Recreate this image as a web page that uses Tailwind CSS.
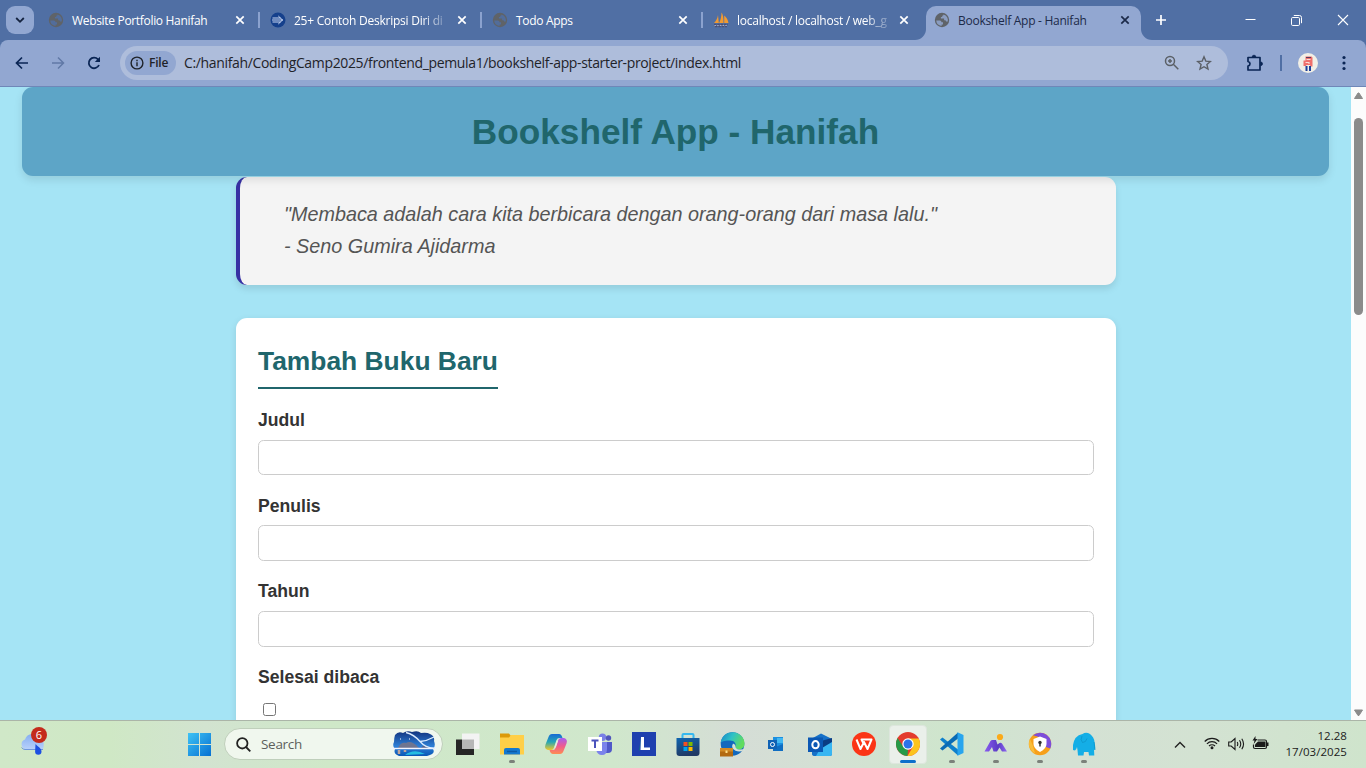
<!DOCTYPE html>
<html lang="id">
<head>
<meta charset="utf-8">
<title>Bookshelf App - Hanifah</title>
<script src="https://cdn.jsdelivr.net/npm/@tailwindcss/browser@4"></script>
</head>
<body class="h-screen w-screen overflow-hidden flex flex-col font-['Open_Sans','Noto_Sans',sans-serif]">

<svg width="0" height="0" class="absolute">
  <defs>
    <symbol id="globe" viewBox="0 0 16 16"><circle cx="8" cy="8" r="7.2" fill="#5f6368"/><path d="M2.200 8.500h3.600q1.700 0 1.700 1.700h1.500v2.300H7.600v1.400Q2.600 13.200 2.200 8.500zM9.500 2.400Q9.600 3.600 8.200 3.800v1.300H6.900v1.400h3.200v1.800h1.400l.6 1.200h1.700Q14.600 4.200 9.500 2.400z" fill="currentColor" opacity=".85"/></symbol>
    <symbol id="x" viewBox="0 0 10 10"><path d="M1.300 1.300 8.700 8.700M8.700 1.300 1.300 8.700" stroke="currentColor" stroke-width="1.700" fill="none"/></symbol>
  </defs>
</svg>

<!-- Tab strip -->
<header class="h-10 shrink-0 bg-[#506fa4] flex text-white text-[12px]">
  <div class="w-[48px] pl-1.5 pt-1.5">
    <div class="size-7 rounded-[9px] bg-[#92a7d1] flex items-center justify-center"><svg width="10" height="8" viewBox="0 0 10 8" fill="none" stroke="#15233f" stroke-width="1.800"><path d="M1.200 2 5 5.800 8.800 2"/></svg></div>
  </div>
  <div class="w-[212px] flex items-center">
    <svg class="size-4 text-[#506fa4]"><use href="#globe"/></svg>
    <span class="ml-2 w-[154px] whitespace-nowrap tracking-[-0.32px] pt-0.5">Website Portfolio Hanifah</span>
    <svg class="size-2.5 ml-[9px]"><use href="#x"/></svg>
    <i class="ml-auto w-[2px] h-4 bg-[#8ba2cf]"></i>
  </div>
  <div class="w-[222px] pl-[10px] flex items-center">
    <svg width="16" height="16" viewBox="0 0 16 16"><circle cx="8" cy="8" r="7.500" fill="#15408c"/><path d="M2.500 6h8M2 8h11M2.500 10h8M8.300 4 12.500 8l-4.200 4" stroke="#dfe9ff" stroke-width=".9" fill="none"/></svg>
    <span class="ml-[8px] w-[151px] whitespace-nowrap tracking-[-0.25px] pt-0.5 [mask-image:linear-gradient(90deg,#000_128px,transparent_158px)]">25+ Contoh Deskripsi Diri di</span>
    <svg class="size-2.5 ml-[12px]"><use href="#x"/></svg>
    <i class="ml-auto w-[2px] h-4 bg-[#8ba2cf]"></i>
  </div>
  <div class="w-[221px] pl-[10px] flex items-center">
    <svg class="size-4 text-[#506fa4]"><use href="#globe"/></svg>
    <span class="ml-2 w-[152px] whitespace-nowrap tracking-[-0.32px] pt-0.5">Todo Apps</span>
    <svg class="size-2.5 ml-[10px]"><use href="#x"/></svg>
    <i class="ml-auto w-[2px] h-4 bg-[#8ba2cf]"></i>
  </div>
  <div class="w-[211px] pl-[10px] flex items-center">
    <svg width="16" height="16" viewBox="0 0 16 16"><path d="M1 11C3 9 4.500 6.500 5 3l.8 8zM6.200 11C7.500 8 8.500 5 8.500.5 10.500 3 10.600 8 10.500 11zM11.200 11V3.500C13.500 5 15 8 15.500 11z" fill="#f29a30"/><path d="M1 12.500h14M2 14.500h12" stroke="#4a4f75" stroke-width="1.600" stroke-dasharray="2.500 .8"/><path d="M1.500 13.500h13" stroke="#ccd" stroke-width=".7" stroke-dasharray="1.500 1.200"/></svg>
    <span class="ml-[8px] w-[151px] whitespace-nowrap tracking-[-0.25px] pt-0.5 [mask-image:linear-gradient(90deg,#000_128px,transparent_158px)]">localhost / localhost / web_g</span>
    <svg class="size-2.5 ml-[11px]"><use href="#x"/></svg>
  </div>
  <div class="w-3 bg-[#92a7d1] self-end h-[34px] relative"><div class="absolute inset-0 bg-[#506fa4] rounded-br-[11px]"></div></div>
  <div class="w-[215px] mt-1.5 pb-1.5 pl-[8px] rounded-t-[10px] bg-[#92a7d1] text-[#1c2a49] flex items-center">
    <svg class="size-4 text-[#92a7d1]"><use href="#globe"/></svg>
    <span class="ml-[8px] w-[152px] whitespace-nowrap tracking-[-0.27px] pt-0.5">Bookshelf App - Hanifah</span>
    <svg class="size-2.5 ml-[10px]"><use href="#x"/></svg>
  </div>
  <div class="w-3 bg-[#92a7d1] self-end h-[34px] relative"><div class="absolute inset-0 bg-[#506fa4] rounded-bl-[11px]"></div></div>
  <div class="flex-1 flex items-center">
    <svg class="ml-[2px]" width="12" height="12" viewBox="0 0 12 12"><path d="M6 1v10M1 6h10" stroke="#fff" stroke-width="1.700"/></svg>
    <svg class="ml-[78px]" width="11" height="11" viewBox="0 0 11 11"><path d="M.5 4.500h10" stroke="#fff"/></svg>
    <svg class="ml-[35px]" width="11" height="11" viewBox="0 0 11 11" fill="none" stroke="#fff"><rect x=".5" y="2.500" width="8" height="8" rx="1.200"/><path d="M2.800.5h5.700a2 2 0 0 1 2 2v5.700"/></svg>
    <svg class="ml-[35px]" width="12" height="12" viewBox="0 0 12 12"><path d="M1 1l10 10M11 1 1 11" stroke="#fff" stroke-width="1.100"/></svg>
  </div>
</header>

<!-- Toolbar -->
<div class="h-[47px] shrink-0 bg-[#506fa4]">
  <div class="h-full bg-[#92a7d1] rounded-t-[8px] border-b border-[#6f87b8] flex items-center text-[#0d2757]">
    <svg class="ml-[15px]" width="14" height="14" viewBox="0 0 14 14" fill="none" stroke="#0a2554" stroke-width="1.700"><path d="M13 7H2M7 1.500 1.500 7 7 12.500"/></svg>
    <svg class="ml-[22px]" width="14" height="14" viewBox="0 0 14 14" fill="none" stroke="#6179a6" stroke-width="1.500"><path d="M1 7h11M7 1.500 12.500 7 7 12.500"/></svg>
    <svg class="ml-[22px]" width="14" height="14" viewBox="0 0 14 14"><path d="M12 9A5.300 5.300 0 1 1 11 3.300L12.500 5" fill="none" stroke="#0a2554" stroke-width="1.800"/><path d="M13 .8V6H7.800z" fill="#0a2554"/></svg>
    <div class="ml-[19px] w-[1108px] h-[34px] rounded-full bg-[#aebddb] flex items-center pl-[5px]">
      <div class="h-6 w-[51px] rounded-full bg-[#92a7d1] flex items-center pl-[5px] text-[12px] font-semibold text-[#1f2329]">
        <svg width="14" height="14" viewBox="0 0 14 14"><circle cx="7" cy="7" r="5.900" fill="none" stroke="#1f2329" stroke-width="1.400"/><path d="M7 6.200V10.200M7 3.800v1.400" stroke="#1f2329" stroke-width="1.400"/></svg>
        <span class="ml-[5px] tracking-[-0.2px]">File</span>
      </div>
      <span class="ml-[8px] text-[14px] tracking-[-0.35px] text-[#1f2329] w-[970px] whitespace-nowrap pb-0.5">C:/hanifah/CodingCamp2025/frontend_pemula1/bookshelf-app-starter-project/index.html</span>
      <svg class="ml-[10px]" width="16" height="16" viewBox="0 0 16 16" fill="none" stroke="#5b6067" stroke-width="1.500"><circle cx="6" cy="6" r="4.500"/><path d="m9.300 9.300 5 5M6 4v4M4 6h4"/></svg>
      <svg class="ml-[16px]" width="16" height="16" viewBox="0 0 16 16" fill="none" stroke="#5b6067" stroke-width="1.400"><path d="m8 1.800 1.800 4.300 4.600.4-3.500 3 1.100 4.600L8 11.700l-4 2.400 1.100-4.600-3.500-3 4.600-.4z"/></svg>
    </div>
    <svg class="ml-[18px]" width="18" height="18" viewBox="0 0 18 18"><path d="M2 3.500h12v12.500H2v-4q2-.4 2-2.200T2 7.500z" fill="none" stroke="#0a2554" stroke-width="1.700" stroke-linejoin="round"/><path d="M6.200 3a1.800 1.800 0 0 1 3.600 0zM14.700 8a1.800 1.800 0 0 1 0 3.600z" fill="#0a2554" stroke="#0a2554" stroke-width=".8"/></svg>
    <i class="ml-[16px] w-[2px] h-4 bg-[#506fa4]"></i>
    <svg class="ml-[16px]" width="20" height="20" viewBox="0 0 20 20"><circle cx="10" cy="10" r="10" fill="#f1efe6"/><path d="M7.500 3.500h6l1 1v9h-2L12 12H8.500L8 13H5.500V7.500h2z" fill="#f0706c"/><path d="M8.500 6.500h4M7.500 9.500h3.500v1.500" stroke="#fbdcd5" stroke-width="1.100" fill="none"/><path d="M8.500 13v5M12 13v5" stroke="#1d3f9a" stroke-width="2"/><path d="M8 4.500h5" stroke="#5b3a5e"/></svg>
    <svg class="ml-[24px]" width="4" height="16" viewBox="0 0 4 16" fill="#0a2554"><circle cx="2" cy="2.500" r="1.600"/><circle cx="2" cy="8" r="1.600"/><circle cx="2" cy="13.500" r="1.600"/></svg>
  </div>
</div>

<!-- Page -->
<div class="flex-1 min-h-0 flex">
  <main class="flex-1 overflow-hidden bg-[#a5e4f5] px-[22px] font-['Liberation_Sans',Arial,sans-serif] text-[17.6px] leading-[1.6] text-[#333]">
    <div class="relative h-[89px] rounded-[11px] bg-[#5da5c7] shadow-[0_4px_9px_rgba(0,0,0,0.1)] flex items-center justify-center pt-px">
      <h1 class="text-[35.2px] font-bold text-[#20666c] whitespace-nowrap">Bookshelf App - Hanifah</h1>
    </div>
    <div class="w-[880px] ml-[214px]">
      <blockquote class="mt-px h-[108px] rounded-[11px] border-l-4 border-[#3730a3] bg-[#f4f4f4] shadow-[0_4px_7px_rgba(0,0,0,0.1)] pl-11 pt-[22px] text-[19.8px] italic text-[#555]">"Membaca adalah cara kita berbicara dengan orang-orang dari masa lalu."<br>- Seno Gumira Ajidarma</blockquote>
      <section class="mt-[33px] h-[500px] rounded-[11px] bg-white shadow-[0_2px_7px_rgba(0,0,0,0.1)] p-[22px]">
        <h2 class="w-[240px] h-[49px] text-[26.4px] font-bold text-[#20666c] border-b-2 border-[#20666c] whitespace-nowrap mb-[17px]">Tambah Buku Baru</h2>
        <div class="h-[85.66px]"><label class="block font-bold mb-[5.5px]">Judul</label><input class="block w-full h-[35.5px] rounded-[5.5px] border border-[#ccc] bg-white"></div>
        <div class="h-[85.66px]"><label class="block font-bold mb-[5.5px]">Penulis</label><input class="block w-full h-[35.5px] rounded-[5.5px] border border-[#ccc] bg-white"></div>
        <div class="h-[85.66px]"><label class="block font-bold mb-[5.5px]">Tahun</label><input class="block w-full h-[36px] rounded-[5.5px] border border-[#ccc] bg-white"></div>
        <div><label class="block font-bold mb-[11.8px]">Selesai dibaca</label><input type="checkbox" class="block ml-[5px] size-[13px]"></div>
      </section>
    </div>
  </main>
  <aside class="w-[15px] shrink-0 bg-[#fcfcfc] flex flex-col items-center">
    <svg class="mt-[5px]" width="9" height="8" viewBox="0 0 9 8"><path d="M4 1h1L8.500 6.500H.5z" fill="#8b8b8b" stroke="#8b8b8b" stroke-linejoin="round"/></svg>
    <div class="mt-[18px] w-[9px] h-[197px] rounded-full bg-[#8b8b8b]"></div>
    <svg class="mt-auto mb-[3px]" width="9" height="8" viewBox="0 0 9 8"><path d="M4 6.500h1L8.500 1H.5z" fill="#8b8b8b" stroke="#8b8b8b" stroke-linejoin="round"/></svg>
  </aside>
</div>

<!-- Taskbar -->
<footer class="h-12 shrink-0 border-t border-[#abb5a8] bg-[linear-gradient(90deg,#d0e8c8_0%,#cfe8c5_8%,#d2e3d0_15%,#cfe8c8_24%,#d0e7cc_45%,#d5ddd6_54%,#d4e0d4_60%,#cfe5cd_69%,#d4e1d4_78%,#d3e2d2_88%,#cfe4cc_100%)] flex items-center text-[#1b1b1b]">
  <div class="w-[188px] pl-[19px]">
    <div class="relative size-7">
      <svg class="absolute left-0 -top-[4px]" width="28" height="30" viewBox="0 0 28 30"><defs><linearGradient id="cl" x2="0" y2="1"><stop stop-color="#85aef0"/><stop offset="1" stop-color="#b7d0fb"/></linearGradient></defs><path d="M6 22a5 5 0 0 1 0-9.500A8 8 0 0 1 20 10c4 .5 6 7 4 12z" fill="url(#cl)"/><path d="M2.500 20.500Q4 22.500 6 22.500h18" stroke="#6f97dd" fill="none"/><path d="M16.500 17c2.500 3 6 4 6 7.500a3.200 3.200 0 0 1-6.400 0z" fill="#1d50e2"/></svg>
      <div class="absolute left-[12px] -top-[4px] size-4 rounded-full bg-[#c42b1c] text-white text-[11px] leading-4 text-center">6</div>
    </div>
  </div>
  <svg width="23" height="23" viewBox="0 0 23 23"><defs><linearGradient id="wn" x2="1" y2="1"><stop stop-color="#3ec3f5"/><stop offset="1" stop-color="#0670d2"/></linearGradient></defs><path d="M0 0h11v11H0zM12 0h11v11H12zM0 12h11v11H0zM12 12h11v11H12z" fill="url(#wn)"/></svg>
  <div class="ml-[13px] mb-px w-[219px] h-8 rounded-full bg-[#f0f7ee] border border-[#bfcfbb] flex items-center pl-[11px]">
    <svg width="15" height="15" viewBox="0 0 15 15" fill="none" stroke="#222" stroke-width="1.800"><circle cx="6.300" cy="6.300" r="5.200"/><path d="m10 10 4.300 4.300"/></svg>
    <span class="ml-[10px] text-[13.500px] tracking-[-0.3px] text-[#5d5f5c] w-[130px]">Search</span>
    <svg width="46" height="26" viewBox="0 0 46 26"><defs><linearGradient id="nt" x2="0" y2="1"><stop stop-color="#12347f"/><stop offset=".6" stop-color="#2e7fd6"/><stop offset="1" stop-color="#0a56b5"/></linearGradient></defs><path d="M4 4q3-4 8-2 4-3 9-1 6-2 9 1 6-1 9 1 5 2 4 7 2 5-1 8 3 5-6 7H8q-6-2-4-7-3-3-1-7 0-4 1-7z" fill="url(#nt)"/><path d="M7 17c2-5 5-6 8-5 3-2 8-1 13 5z" fill="#6f7590"/><path d="M30 17q4-6 8 0z" fill="#54628b"/><path d="M8 19v4M14 19v2" stroke="#bda39b" stroke-width="2.500"/><path d="M14 24q9-7 20-1z" fill="#25bce2"/><path d="M0 17.500h45" stroke="#f2f4ff" stroke-width="1.700"/><path d="M15 1.500q8 2 14 9t15 6.500M43 6Q36 10 29 10.500" stroke="#dcecff" stroke-width="1.300" fill="none"/><path d="M9 8h1M18 8h1" stroke="#fff"/></svg>
  </div>
  <div class="ml-[3px] flex h-full text-[#7b817a]">
    <div class="w-11 flex flex-col items-center pt-[12px]"><svg width="24" height="24" viewBox="0 0 24 24"><path d="M0 6.500h18V22H0z" fill="#262626"/><path d="M6 .5h17.500V16H6z" fill="#f3f3f3"/><path d="M6 6.500h12V16H6z" fill="#b6b6b6"/></svg></div>
    <div class="w-11 flex flex-col items-center pt-[11px]"><svg width="24" height="24" viewBox="0 0 24 24"><path d="M0 1.500h9l2 2.500v3H0z" fill="#dc9a09"/><path d="M0 5.500h9L11 3h13v19.500H0z" fill="#ffcf48"/><path d="M4 22.500V18q0-2 2-2h12q2 0 2 2v4.500z" fill="#1479d0"/><path d="M7 19.500h10" stroke="#0c5aa6" stroke-width="1.500"/></svg><i class="mt-[4px] w-1.5 h-[3px] rounded bg-current"></i></div>
    <div class="w-11 flex flex-col items-center pt-[12px]"><svg width="24" height="22" viewBox="0 0 24 22"><defs><linearGradient id="ca" x2="0" y2="1"><stop stop-color="#1769d5"/><stop offset=".5" stop-color="#25a7b5"/><stop offset="1" stop-color="#f1c92a"/></linearGradient><linearGradient id="cb" x2="0" y2="1"><stop stop-color="#a65df1"/><stop offset=".5" stop-color="#ee5b90"/><stop offset="1" stop-color="#ff8d52"/></linearGradient></defs><path d="M8 1h7q2.500 0 3.500 4H15q-2 0-2.700 2.500L10 14.500q-.8 2.500-3 2.500H4Q0 16 1.500 11.500L4.500 4Q5.500 1 8 1z" fill="url(#ca)"/><path d="M16 21H9q-2.500 0-3.500-4H9q2 0 2.700-2.500L14 7.500Q14.800 5 17 5h3q4 1 2.500 5.500L19.500 18q-1 3-3.500 3z" fill="url(#cb)"/><path d="M12.800 7.500h1.400l-2.400 7h-1.500z" fill="#e4eee2"/></svg></div>
    <div class="w-11 flex flex-col items-center pt-[12px]"><svg width="26" height="23" viewBox="0 0 26 23"><circle cx="15.500" cy="4.200" r="3.700" fill="#7a80e6"/><circle cx="21.500" cy="5" r="2.700" fill="#4f55bc"/><path d="M18 9h7v7q0 4-4 4h-3z" fill="#5059c9"/><path d="M9 9h11v7q0 6-5 6t-6-6z" fill="#7b83eb"/><path d="M1 4h14v14H1z" fill="#fff"/><path d="M4.500 7.500h7M8 7.500V15" stroke="#4b53bc" stroke-width="2"/></svg></div>
    <div class="w-11 flex flex-col items-center pt-[11px]"><svg width="24" height="24" viewBox="0 0 24 24"><path d="M0 0h24v24H0z" fill="#1e40af"/><path d="m8 18-1 1 2-14z" fill="#0d7187"/><path d="M9 5h3v10.500h6V18H8.500z" fill="#fff"/></svg></div>
    <div class="w-11 flex flex-col items-center pt-[11px]"><svg width="24" height="24" viewBox="0 0 24 24"><defs><linearGradient id="st" x2=".3" y2="1"><stop stop-color="#0f65b1"/><stop offset="1" stop-color="#213a65"/></linearGradient></defs><path d="M6.500 7V3q0-1 1-1h9q1 0 1 1v4" fill="none" stroke="#35b8ef" stroke-width="2"/><path d="M.5 6h23v15q0 3-3 3h-17q-3 0-3-3z" fill="url(#st)"/><path d="M7.500 10h4v4h-4z" fill="#f25022"/><path d="M12.500 10h4v4h-4z" fill="#7fba00"/><path d="M7.500 15h4v4h-4z" fill="#00a4ef"/><path d="M12.500 15h4v4h-4z" fill="#ffb900"/></svg></div>
    <div class="w-11 flex flex-col items-center pt-[11px]"><svg width="25" height="25" viewBox="0 0 25 25"><defs><linearGradient id="eg" x2="1" y2=".4"><stop stop-color="#1683c9"/><stop offset=".5" stop-color="#2fc2c6"/><stop offset="1" stop-color="#62dc5e"/></linearGradient></defs><circle cx="12.500" cy="12" r="11.800" fill="#1268bd"/><path d="M.7 11C1.500 4 6.500.2 12.500.2 20 .2 24.500 6 24.500 11.500c0 4-3 6-6 6-3 0-4-1-3-3 .8-3-1-6-5.500-6C6 8.500 2 9 .7 11z" fill="url(#eg)"/><path d="M13 11.500q-2.500 4.500 2.500 7.300 4 1.700 8-.3l1.500 1V16q-2 2-6 1.500-3.500-.5-3.500-3 .3-2-2.500-3z" fill="#d7e1d8"/><path d="M0 16h13v8.500H0z" fill="#b36a12"/><path d="M0 16h13v3.500H0z" fill="#d28a25"/><path d="M5.500 18.500h2v2.500h-2z" fill="#ffe08a"/></svg></div>
    <div class="w-11 flex flex-col items-center pt-[16px]"><svg width="16" height="15" viewBox="0 0 16 15"><path d="M5 0h10v14H5z" fill="#1b8fe0"/><path d="M9 1h6v5H9z" fill="#42b8f2"/><path d="M5 11l10-4v7H5z" fill="#0f6dc2"/><path d="M0 3h9v9H0z" fill="#0f62b5"/><circle cx="4.500" cy="7.500" r="2" fill="none" stroke="#fff" stroke-width="1"/></svg></div>
    <div class="w-11 flex flex-col items-center pt-[12px]"><svg width="24" height="24" viewBox="0 0 24 24"><path d="M4 5.500 13 .5 24 6v15q0 2-2 2H7q-3 0-3-2z" fill="#1671c8"/><path d="M13 14 24 8v13q0 2-2 2H8z" fill="#38b6f2"/><path d="M13 8 24 5v4L14 15z" fill="#0a3c83"/><path d="M0 4.500h15V19H0z" fill="#0b58b4"/><ellipse cx="7.500" cy="11.700" rx="3.200" ry="3.600" fill="none" stroke="#fff" stroke-width="2"/></svg></div>
    <div class="w-11 flex flex-col items-center pt-[11px]"><svg width="24" height="24" viewBox="0 0 24 24"><circle cx="12" cy="12" r="12" fill="#fb3516"/><path d="M4.500 7.500 8.500 17l3.500-7 3.500 7 4-9.500H9.500l2 4" fill="none" stroke="#fff" stroke-width="2" stroke-linejoin="round"/></svg></div>
    <div class="w-11 px-[3px] pt-1"><div class="h-[39px] rounded-[4px] bg-[#eaf0ea] border border-[#dde6dd] flex flex-col items-center pt-[6px]"><svg class="shrink-0" width="24" height="24" viewBox="0 0 24 24"><circle cx="12" cy="12" r="12" fill="#e33b2e"/><path d="M1.600 6 7.200 14.800 12 17.500 11.500 24A12 12 0 0 1 1.600 6z" fill="#269a47"/><path d="M12 6.500h10.700A12 12 0 0 1 11.500 24l5.300-9z" fill="#fcc31e"/><circle cx="12" cy="12" r="5.700" fill="#fff"/><circle cx="12" cy="12" r="4.500" fill="#2c72e8"/></svg><i class="mt-[4px] shrink-0 w-4 h-[3px] rounded bg-[#0b6fcb]"></i></div></div>
    <div class="w-11 flex flex-col items-center pt-[11px]"><svg width="24" height="24" viewBox="0 0 24 24"><path d="M0 7.500 2.500 5.500 18 17.500v6z" fill="#0e80cc"/><path d="M0 16.500 2.500 18.500 18 6.500v-6z" fill="#0a6bb5"/><path d="m17.500.300 6 2.700v18l-6 2.700z" fill="#28a5ee"/></svg><i class="mt-[4px] w-1.5 h-[3px] rounded bg-current"></i></div>
    <div class="w-11 flex flex-col items-center pt-[11px]"><svg width="24" height="24" viewBox="0 0 24 24"><defs><linearGradient id="mt" x2="1"><stop stop-color="#8a5cf0"/><stop offset=".6" stop-color="#5a3cc4"/><stop offset="1" stop-color="#8f66f2"/></linearGradient></defs><circle cx="16" cy="5" r="3.100" fill="#fbaa19"/><path d="M.5 19.500 6.500 9q1-1.500 2.500-1h3l1.500 4.500 2-1.500q1.500-.7 2.500.5l5 8H18l-2.500-4-2.500 4H9.500L8 15l-3 4.500z" fill="url(#mt)"/></svg><i class="mt-[4px] w-1.5 h-[3px] rounded bg-current"></i></div>
    <div class="w-11 flex flex-col items-center pt-[11px]"><svg width="24" height="24" viewBox="0 0 24 24"><circle cx="12" cy="12" r="11.200" fill="#f6a01a"/><path d="M5 3.300A11.200 11.200 0 0 1 22.300 16.500L18 15V7z" fill="#7c4ddb"/><path d="M2 7A11 11 0 0 0 7 21.500L5 14z" fill="#f9bd3a"/><path d="m12 4.500 6.500 2.500v5q0 4.500-6.500 8-6.500-3.500-6.500-8V7z" fill="#fff"/><circle cx="12" cy="10.500" r="1.700" fill="#333"/><path d="M12 10.500v4" stroke="#333" stroke-width="1.500"/></svg><i class="mt-[4px] w-1.5 h-[3px] rounded bg-current"></i></div>
    <div class="w-11 flex flex-col items-center pt-[11px]"><svg width="24" height="24" viewBox="0 0 24 24"><path d="M1 13Q1.500 9 3.500 6q3-3.500 7-4Q14-.5 18 2q4 3 4.500 8 1 4 .5 8l-1-.5.300 6H17l-.5-3.500h-4.500l-.5 3.500H6L5.500 18 5 15q-.5 2.500-2 3.500l-2-.5z" fill="#14aee6"/><path d="M10 4q-2 4 .5 6.500 3.500 0 4.500-4M22 10l1 8" fill="none" stroke="#0d92c4" stroke-width=".7"/></svg><i class="mt-[4px] w-1.5 h-[3px] rounded bg-current"></i></div>
  </div>
  <svg class="ml-[68px]" width="12" height="8" viewBox="0 0 12 8"><path d="M1 6.500 6 1.500l5 5" fill="none" stroke="#222" stroke-width="1.400"/></svg>
  <svg class="ml-[18px] mb-[3px]" width="16" height="14" viewBox="0 0 16 14" fill="none" stroke="#1b1b1b" stroke-width="1.200"><path d="M.7 5.500a10.300 10.300 0 0 1 14.600 0M2.900 7.800a7.200 7.200 0 0 1 10.200 0M5 10a4.300 4.300 0 0 1 6 0"/><circle cx="8" cy="11.800" r=".9" fill="#1b1b1b"/></svg>
  <svg class="ml-[8px] mb-[2px]" width="17" height="14" viewBox="0 0 17 14" fill="none" stroke="#1b1b1b" stroke-width="1.100"><path d="M.7 5h2.500L7 1.500v11L3.200 9H.7zM9.200 5q1.200 2 0 4M11.500 3.300q2.500 3.700 0 7.400M13.800 1.800q3.500 5.200 0 10.400"/></svg>
  <svg class="ml-[7px] mb-[4px]" width="17" height="14" viewBox="0 0 17 14"><path d="M5.500 4h7.500q1.500 0 1.500 1.500V11q0 1.500-1.500 1.500H3Q1.500 12.500 1.500 11V8.500" fill="none" stroke="#1b1b1b" stroke-width="1.200"/><path d="M6 5.500h7.500V11H3V8.500z" fill="#1b1b1b"/><path d="M15 6.500h1.500v3.500H15z" fill="#1b1b1b"/><path d="M3.500 0 .5 4.500h2L1.700 8 5.500 3h-2z" fill="#1b1b1b"/></svg>
  <div class="ml-auto mr-[19px] mb-[2px] text-right text-[11.500px] leading-4 tracking-[0.05px]">12.28<br>17/03/2025</div>
</footer>
</body>
</html>
